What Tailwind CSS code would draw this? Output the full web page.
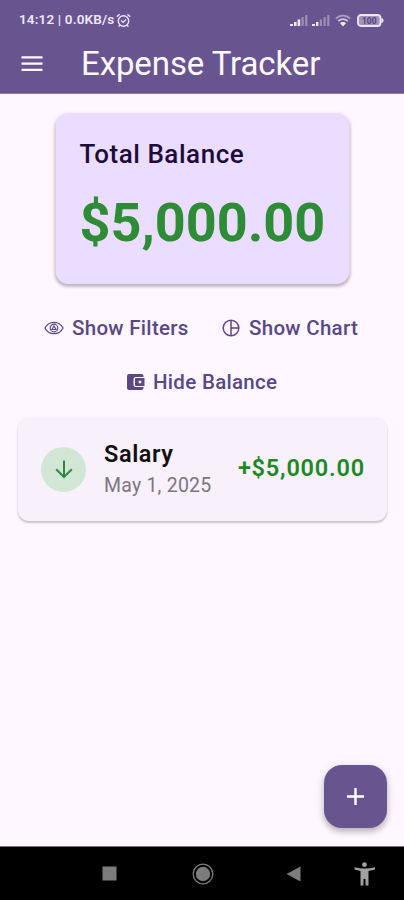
<!DOCTYPE html>
<html lang="en">
<head>
<meta charset="utf-8">
<title>Expense Tracker</title>
<script src="https://cdn.jsdelivr.net/npm/@tailwindcss/browser@4"></script>
</head>
<body class="w-[404px] h-[900px] overflow-hidden bg-[#fef7ff] font-[Roboto,sans-serif] flex flex-col">
<header class="bg-[#68548e] h-[94px] shrink-0 border-b border-[#8d7dab]">
  <div class="flex items-center h-10 pl-[19px] pr-5 text-[#eee6f8]">
    <span class="text-[13.5px] font-semibold leading-none whitespace-nowrap tracking-[0.15px]">14:12 | 0.0KB/s</span>
    <svg class="ml-[2px] w-[15px] h-[15px]" viewBox="0 0 15 15" fill="none" stroke="currentColor" stroke-width="1.4"><circle cx="7.5" cy="8" r="5.2"/><path d="M.8 3.8 3.6 1.2M14.2 3.8 11.4 1.2M5 7.4 7.2 9.4 10 6.6M3.8 12.2 2.6 13.6M11.2 12.2 12.4 13.6"/></svg>
    <svg class="ml-auto w-[18px] h-3" viewBox="0 0 18 12" fill="currentColor"><path d="M0 10h3v2H0zM4 8h2.6v4H4zM7.6 5.5h2.6V12H7.6z"/><path opacity=".4" d="M11.5 3h2.2v9h-2.2zM15.2 1h2.2v11h-2.2z"/></svg>
    <svg class="ml-1 w-[18px] h-3" viewBox="0 0 18 12" fill="currentColor"><path d="M0 10h3v2H0zM4 8h2.4v4H4z"/><path opacity=".4" d="M7.8 5.5H10V12H7.8zM11.5 3h2.2v9h-2.2zM15.2 1h2.2v11h-2.2z"/></svg>
    <svg class="ml-[5px] w-4 h-[13px]" viewBox="0 0 16 13" fill="none" stroke="currentColor" stroke-width="1.8"><path opacity=".5" d="M.8 4.6C4.8.5 11.2.5 15.2 4.6"/><path opacity=".75" d="M3.2 7.2c2.8-2.8 6.8-2.8 9.6 0"/><path d="M5 9.3c1.5-1.8 4.5-1.8 6 0L8 12.5z" fill="currentColor" stroke="none"/></svg>
    <svg class="ml-[6px] w-[27px] h-[13px]" viewBox="0 0 27 13"><rect x="1" y="1" width="22.5" height="11" rx="3" fill="#a193bb" stroke="currentColor" stroke-width="1.8"/><path d="M24.3 4c3 .6 3 4.4 0 5z" fill="currentColor"/><text x="12.2" y="9.6" text-anchor="middle" font-size="8.5" font-weight="700" fill="#54427a">100</text></svg>
  </div>
  <div class="flex items-center h-[47px] pl-[21px] text-[#fdf8ff]">
    <svg class="w-[22px] h-4" viewBox="0 0 22 16" fill="currentColor"><path d="M.5.2h21v2.2H.5zM.5 6.5h21v2.200H.5zM.5 12.7h21v2.2H.5z"/></svg>
    <h1 class="ml-[38px] text-[33px] leading-none whitespace-nowrap tracking-[-0.1px]">Expense Tracker</h1>
  </div>
</header>
<main class="flex-1 flex flex-col pt-[19px]">
  <section class="self-center w-[294px] h-[171px] rounded-[13px] bg-[#ebddff] shadow-[0_3px_3px_rgba(0,0,0,.2),0_1px_4px_rgba(0,0,0,.12)] pl-[24px] pt-[26px] translate-x-[0.5px]">
    <h2 class="text-[26px] leading-[30px] font-medium text-[#1d0c3a] whitespace-nowrap tracking-[0.55px]">Total Balance</h2>
    <p class="mt-[19px] text-[54px] leading-[70px] font-bold text-[#2e8b36] whitespace-nowrap">$5,000.00</p>
  </section>
  <div class="mt-[30px] flex h-7 items-center pl-[44px] text-[#5a4784] text-[20.5px] font-medium whitespace-nowrap tracking-[0.3px]">
    <svg class="w-5 h-[14px]" viewBox="0 0 20 14" fill="none" stroke="currentColor" stroke-width="1.2"><path d="M.9 7C4.8-.6 15.2-.6 19.1 7 15.2 14.6 4.8 14.6.9 7z"/><circle cx="10" cy="7" r="3.8"/><path d="M8 8.500 10 5l2 3.500z"/></svg>
    <span class="ml-2 w-[150px]">Show Filters</span>
    <svg class="w-[18px] h-[18px]" viewBox="0 0 18 18" fill="none" stroke="currentColor" stroke-width="1.5"><circle cx="9" cy="9" r="7.8"/><path d="M9 1.2v15.6M9 9h7.8"/></svg>
    <span class="ml-[9px]">Show Chart</span>
  </div>
  <div class="mt-[26px] flex h-7 items-center pl-[127px] text-[#5a4784] text-[20.5px] font-medium whitespace-nowrap tracking-[0.3px]">
    <svg class="w-[18px] h-4" viewBox="0 0 18 16"><path fill="currentColor" d="M2 0h12.500q2 0 2 2v1H9Q6.500 3 6.500 5.500v5Q6.500 13 9 13h7.500v1q0 2-2 2H2q-2 0-2-2V2Q0 0 2 0z"/><path fill="currentColor" fill-rule="evenodd" d="M9 4h8.500v8H9q-1 0-1-1V5q0-1 1-1zM11.700 6.700v2.600h2.600V6.700z"/></svg>
    <span class="ml-2">Hide Balance</span>
  </div>
  <article class="mt-[22px] ml-[18px] mr-[17px] h-[103px] rounded-[11px] bg-[#f8f1fb] shadow-[0_2px_2px_rgba(0,0,0,.2),0_0_3px_rgba(0,0,0,.06)] flex items-center pl-[23px] pr-[22px]">
    <div class="w-[45px] h-[45px] shrink-0 rounded-full bg-[#d1e6d5] flex items-center justify-center text-[#2e8b3e] -mt-px">
      <svg class="w-[18px] h-[19px]" viewBox="0 0 18 19" fill="none" stroke="currentColor" stroke-width="2"><path d="M9 .5v16M1.2 9.2 9 17l7.8-7.8"/></svg>
    </div>
    <div class="ml-[18px] pt-px whitespace-nowrap">
      <h3 class="text-[23.5px] leading-8 font-semibold text-[#111] tracking-[0.6px]">Salary</h3>
      <p class="text-[19.5px] leading-8 text-[#7b767e] tracking-[0.22px]">May 1, 2025</p>
    </div>
    <span class="ml-auto -mt-px text-[23.5px] font-semibold text-[#1b8a24] whitespace-nowrap tracking-[0.8px]">+$5,000.00</span>
  </article>
  <button class="mt-auto mb-[18px] mr-[17px] self-end w-[63px] h-[63px] rounded-[18px] bg-[#68548e] shadow-[0_4px_6px_rgba(0,0,0,.22),0_1px_8px_rgba(0,0,0,.1)] flex items-center justify-center text-white">
    <svg class="w-[17px] h-[17px]" viewBox="0 0 17 17" fill="none" stroke="currentColor" stroke-width="2.4"><path d="M8.5 0v17M0 8.5h17"/></svg>
  </button>
</main>
<nav class="h-[54px] shrink-0 bg-black border-t border-[#77737a] flex items-center pl-[102px] text-[#7c7c7c]">
  <svg class="w-[15px] h-[15px]" viewBox="0 0 15 15"><path fill="currentColor" d="M.5.5h14v14H.5z"/></svg>
  <svg class="ml-[75px] w-[22px] h-[22px]" viewBox="0 0 22 22"><circle cx="11" cy="11" r="9.8" fill="none" stroke="currentColor" stroke-width="1.3"/><circle cx="11" cy="11" r="7.2" fill="currentColor"/></svg>
  <svg class="ml-[72px] w-[15px] h-[16px]" viewBox="0 0 15 16"><path fill="currentColor" d="M14.5.5v15L.5 8z"/></svg>
  <svg class="ml-[53px] w-[22px] h-6 text-[#a0a0a0]" viewBox="0 0 22 24" fill="currentColor"><circle cx="10.5" cy="2.7" r="2.4"/><path d="M.5 5.3q10 2.4 20.5 0v2.2L14.500 9v14.500h-3V17h-2v6.500h-3V9L.5 7.500z"/></svg>
</nav>
</body>
</html>
